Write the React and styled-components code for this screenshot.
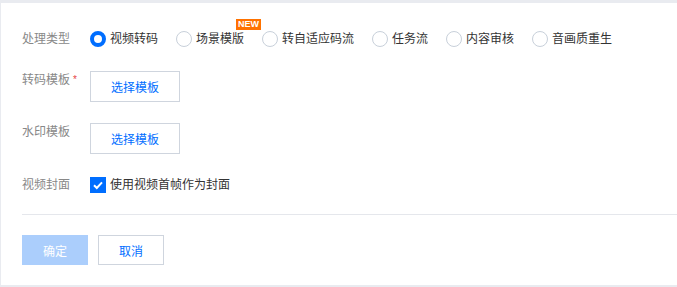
import React from "react";
import styled, { createGlobalStyle } from "styled-components";

const GlobalStyle = createGlobalStyle`
  html, body {
    margin: 0;
    padding: 0;
    background: #e9ebf0;
  }
  body {
    font-family: "Liberation Sans", "Noto Sans CJK SC", sans-serif;
    font-size: 12px;
    color: #333;
  }
`;

const types = ["视频转码", "场景模版", "转自适应码流", "任务流", "内容审核", "音画质重生"];

const App = () => {
    const [ state, setState ] = React.useState({
        type: "视频转码",
        useFirstFrame: true,
    });

    return (
        <>
            <GlobalStyle />
            <Card>
                <Form>
                    <Row $align="center" $gap="23px">
                        <Label>处理类型</Label>
                        <RadioGroup>
                            {types.map(t => (
                                <RadioItem key={t} onClick={() => setState(s => ({ ...s, type: t }))}>
                                    <RadioCircle $checked={state.type === t} />
                                    <RadioText>
                                        {t}
                                        {t === "场景模版" && <NewBadge>NEW</NewBadge>}
                                    </RadioText>
                                </RadioItem>
                            ))}
                        </RadioGroup>
                    </Row>
                    <Row $gap="21px">
                        <Label $required>转码模板</Label>
                        <SelectButton>选择模板</SelectButton>
                    </Row>
                    <Row $gap="22px">
                        <Label>水印模板</Label>
                        <SelectButton>选择模板</SelectButton>
                    </Row>
                    <Row $align="center" $gap="20px">
                        <Label>视频封面</Label>
                        <CheckItem onClick={() => setState(s => ({ ...s, useFirstFrame: !s.useFirstFrame }))}>
                            <CheckBox $checked={state.useFirstFrame}>
                                {state.useFirstFrame && (
                                    <svg width="12" height="12" viewBox="0 0 12 12">
                                        <path d="M2 6.2 L4.8 9 L10 3.4" fill="none" stroke="#fff" strokeWidth="2" />
                                    </svg>
                                )}
                            </CheckBox>
                            <RadioText>使用视频首帧作为封面</RadioText>
                        </CheckItem>
                    </Row>
                </Form>
                <Footer>
                    <PrimaryButton disabled>确定</PrimaryButton>
                    <DefaultButton>取消</DefaultButton>
                </Footer>
            </Card>
        </>
    );
};

const Card = styled.div`
    margin: 3px 0 0 1px;
    height: 282px;
    background-color: #fff;
    box-sizing: border-box;
    padding-top: 27px;
`

const Form = styled.div`
    padding-left: 21px;
    display: flex;
    flex-direction: column;
`

const Row = styled.div`
    display: flex;
    align-items: ${(p) => p.$align || "flex-start"};
    margin-bottom: ${(p) => p.$gap || "20px"};
`

const Label = styled.div`
    width: 68px;
    flex-shrink: 0;
    line-height: 18px;
    color: #888;
    position: relative;

    &::after {
        content: ${(p) => (p.$required ? '"*"' : '""')};
        color: #e54545;
        position: absolute;
        left: 51px;
        top: 0px;
        font-size: 10px;
    }
`

const RadioGroup = styled.div`
    display: flex;
    align-items: center;
    gap: 18px;
`

const RadioItem = styled.label`
    display: flex;
    align-items: center;
    gap: 4px;
    cursor: pointer;
`

const RadioCircle = styled.span`
    width: 16px;
    height: 16px;
    box-sizing: border-box;
    border-radius: 50%;
    background: #fff;
    border: ${(p) => (p.$checked ? "4px solid #006eff" : "1px solid #c8d0da")};
`

const RadioText = styled.span`
    position: relative;
    line-height: 18px;
    color: #333;
    white-space: nowrap;
`

const NewBadge = styled.span`
    position: absolute;
    left: 40px;
    top: -11px;
    width: 25px;
    height: 11px;
    background: #ff7200;
    color: #fff;
    font-size: 9px;
    font-weight: 700;
    line-height: 11px;
    text-align: center;
    font-family: "Liberation Sans", sans-serif;
`

const SelectButton = styled.button`
    width: 90px;
    height: 31px;
    box-sizing: border-box;
    background: #fff;
    border: 1px solid #cfd5de;
    color: #006eff;
    font-family: inherit;
    font-size: 12px;
    padding: 0;
    cursor: pointer;
`

const CheckItem = styled.label`
    display: flex;
    align-items: center;
    gap: 4px;
    cursor: pointer;
`

const CheckBox = styled.span`
    width: 16px;
    height: 16px;
    box-sizing: border-box;
    display: flex;
    align-items: center;
    justify-content: center;
    background: ${(p) => (p.$checked ? "#006eff" : "#fff")};
    border: 1px solid ${(p) => (p.$checked ? "#006eff" : "#c8d0da")};
`

const Footer = styled.div`
    margin: 0 0 0 21px;
    border-top: 1px solid #e5e7ec;
    padding-top: 20px;
    display: flex;
    gap: 10px;
`

const PrimaryButton = styled.button`
    width: 66px;
    height: 30px;
    border: none;
    background: #abcefc;
    color: #fff;
    font-family: inherit;
    font-size: 12px;
    padding: 0;
`

const DefaultButton = styled.button`
    width: 66px;
    height: 30px;
    box-sizing: border-box;
    border: 1px solid #cfd5de;
    background: #fff;
    color: #006eff;
    font-family: inherit;
    font-size: 12px;
    padding: 0;
    cursor: pointer;
`

export default App;
